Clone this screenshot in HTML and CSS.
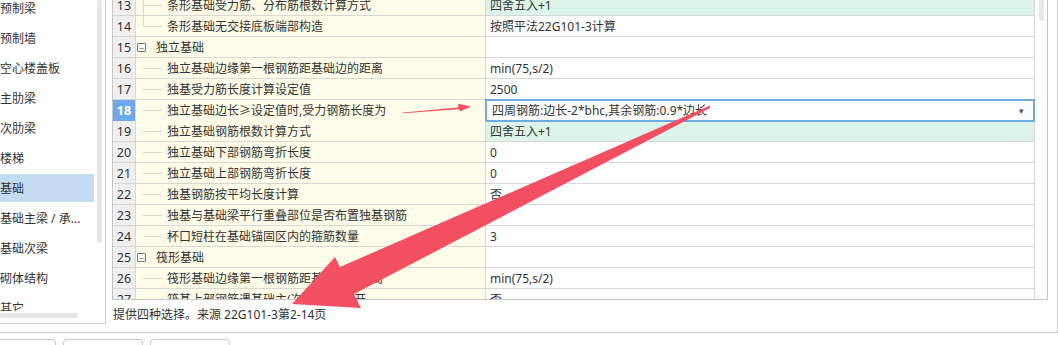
FILE: index.html
```html
<!DOCTYPE html>
<html lang="zh-CN">
<head>
<meta charset="UTF-8">
<meta name="viewport" content="width=device-width, initial-scale=1.0">
<title>计算设置</title>
<link rel="stylesheet" href="styles.css">
</head>
<body>
<div class="window">
  <div class="frame">
    <aside class="side">
      <div class="side-body">
        <ul class="nav">
          <li>预制梁</li>
          <li>预制墙</li>
          <li>空心楼盖板</li>
          <li>主肋梁</li>
          <li>次肋梁</li>
          <li>楼梯</li>
          <li class="active">基础</li>
          <li>基础主梁 / 承台梁</li>
          <li>基础次梁</li>
          <li>砌体结构</li>
          <li>其它</li>
        </ul>
        <div class="vscroll"><span class="thumb"></span></div>
      </div>
      <div class="hscroll"><span class="thumb"></span></div>
    </aside>

    <section class="main">
      <div class="grid">
        <div class="rows">
          <div class="rows-inner">
            <div class="row">
              <div class="num">13</div>
              <div class="name child mid">条形基础受力筋、分布筋根数计算方式</div>
              <div class="val green">四舍五入+1</div>
            </div>
            <div class="row">
              <div class="num">14</div>
              <div class="name child last">条形基础无交接底板端部构造</div>
              <div class="val">按照平法22G101-3计算</div>
            </div>
            <div class="row">
              <div class="num">15</div>
              <div class="name group"><span class="toggle">−</span>独立基础</div>
              <div class="val"></div>
            </div>
            <div class="row">
              <div class="num">16</div>
              <div class="name child">独立基础边缘第一根钢筋距基础边的距离</div>
              <div class="val">min(75,s/2)</div>
            </div>
            <div class="row">
              <div class="num">17</div>
              <div class="name child">独基受力筋长度计算设定值</div>
              <div class="val">2500</div>
            </div>
            <div class="row current">
              <div class="num">18</div>
              <div class="name child">独立基础边长≥设定值时,受力钢筋长度为</div>
              <div class="val editing">四周钢筋:边长-2*bhc,其余钢筋:0.9*边长<span class="caret">▾</span></div>
            </div>
            <div class="row">
              <div class="num">19</div>
              <div class="name child">独立基础钢筋根数计算方式</div>
              <div class="val green">四舍五入+1</div>
            </div>
            <div class="row">
              <div class="num">20</div>
              <div class="name child">独立基础下部钢筋弯折长度</div>
              <div class="val">0</div>
            </div>
            <div class="row">
              <div class="num">21</div>
              <div class="name child">独立基础上部钢筋弯折长度</div>
              <div class="val">0</div>
            </div>
            <div class="row">
              <div class="num">22</div>
              <div class="name child">独基钢筋按平均长度计算</div>
              <div class="val">否</div>
            </div>
            <div class="row">
              <div class="num">23</div>
              <div class="name child">独基与基础梁平行重叠部位是否布置独基钢筋</div>
              <div class="val"></div>
            </div>
            <div class="row">
              <div class="num">24</div>
              <div class="name child">杯口短柱在基础锚固区内的箍筋数量</div>
              <div class="val">3</div>
            </div>
            <div class="row">
              <div class="num">25</div>
              <div class="name group"><span class="toggle">−</span>筏形基础</div>
              <div class="val"></div>
            </div>
            <div class="row">
              <div class="num">26</div>
              <div class="name child">筏形基础边缘第一根钢筋距基础边的距离</div>
              <div class="val">min(75,s/2)</div>
            </div>
            <div class="row">
              <div class="num">27</div>
              <div class="name child">筏基上部钢筋遇基础主(次)梁是否断开</div>
              <div class="val">否</div>
            </div>
          </div>
        </div>
        <div class="vbar"><span class="thumb"></span></div>
      </div>
      <p class="hint">提供四种选择。来源 22G101-3第2-14页</p>
    </section>
  </div>

  <div class="buttons">
    <button class="btn first" aria-label="导入规则"></button>
    <button class="btn" aria-label="导出规则"></button>
    <button class="btn" aria-label="恢复默认值"></button>
  </div>

  <svg class="marks" width="1058" height="345" viewBox="0 0 1058 345">
    <polygon class="arrow" points="403,112.4 458,107.6 458.5,103.8 471,106.6 460.5,111.2 458.5,109.2 403,113.2"/>
    <polygon class="arrow" points="710,105.5 340,267 335,257 292,304 361,308 354,294 710,108"/>
  </svg>
</div>
</body>
</html>
```

FILE: styles.css
```css
* {
  box-sizing: border-box;
}
body {
  margin: 0;
  width: 1058px;
  height: 345px;
  overflow: hidden;
  background-color: #fff;
  font-family: "Noto Sans", "Noto Sans CJK SC", sans-serif;
  font-size: 12px;
  color: #333;
}
.window {
  position: relative;
  width: 1058px;
  height: 345px;
  overflow: hidden;
}
.frame {
  display: flex;
  width: 1058px;
  height: 333px;
  border-right: 1px solid #cacaca;
  border-bottom: 1px solid #cacaca;
}

/* left list */
.side {
  width: 106px;
  height: 324px;
  border-right: 1px solid #cfcfcf;
  border-bottom: 1px solid #cfcfcf;
  display: flex;
  flex-direction: column;
  flex-shrink: 0;
}
.side-body {
  display: flex;
  height: 311px;
  overflow: hidden;
}
.nav {
  list-style: none;
  margin: -6px 0 0 0;
  padding: 0;
  width: 94px;
}
.nav li {
  height: 28px;
  margin-bottom: 2px;
  line-height: 30px;
  padding-right: 8px;
  white-space: nowrap;
  overflow: hidden;
  text-overflow: ellipsis;
  color: #333;
}
.nav li.active {
  background-color: #c4dcf2;
}
.vscroll {
  width: 11px;
  padding-left: 3px;
}
.vscroll .thumb {
  display: block;
  width: 5px;
  height: 243px;
  background-color: #e6e6e6;
  border-radius: 2px;
}
.hscroll {
  height: 12px;
  padding-top: 2px;
}
.hscroll .thumb {
  display: block;
  width: 78px;
  height: 5px;
  background-color: #e6e6e6;
  border-radius: 2px;
}

/* property grid */
.main {
  margin-left: 6px;
  display: flex;
  flex-direction: column;
}
.grid {
  display: flex;
  width: 936px;
  height: 300px;
  border: 1px solid #c6c6c6;
  border-top: none;
}
.rows {
  width: 922px;
  overflow: hidden;
}
.rows-inner {
  margin-top: -5px;
}
.row {
  display: grid;
  grid-template-columns: 23px 350px 549px;
  height: 21px;
  border-bottom: 1px solid #d7d7d7;
  line-height: 21px;
}
.row > div {
  border-right: 1px solid #d7d7d7;
  white-space: nowrap;
  overflow: hidden;
}
.num {
  background-color: #efefef;
  text-align: center;
  color: #333;
  font-size: 12.5px;
}
.name {
  background-color: #fffdea;
  position: relative;
}
.name.child {
  padding-left: 31px;
}
.name.child::before {
  content: "";
  position: absolute;
  left: 7px;
  top: 10px;
  width: 19px;
  border-top: 1px solid #d9d9cf;
}
.name.mid::after,
.name.last::after {
  content: "";
  position: absolute;
  left: 7px;
  top: 0;
  bottom: 0;
  border-left: 1px solid #d9d9cf;
}
.name.last::after {
  bottom: 9px;
}
.name.group {
  display: flex;
  align-items: center;
  padding-left: 1px;
}
.toggle {
  display: inline-flex;
  align-items: center;
  justify-content: center;
  width: 9px;
  height: 9px;
  margin-right: 10px;
  border: 1px solid #777;
  border-radius: 1px;
  font-size: 8px;
  line-height: 7px;
  color: #444;
  background-color: #fff;
}
.val {
  padding-left: 4px;
  background-color: #fff;
}
.val.green {
  background-color: #dcf5ea;
}
.current .num {
  background-color: #6ea8ea;
  color: #fff;
  font-weight: bold;
}
.val.editing {
  position: relative;
  overflow: visible;
  padding-left: 6px;
}
.val.editing::after {
  content: "";
  position: absolute;
  top: -1px;
  left: -1px;
  right: -1px;
  bottom: -1px;
  border: 2px solid #6ea8e6;
}
.caret {
  position: absolute;
  right: 10px;
  top: 0;
  font-size: 9px;
  color: #555;
}
.vbar {
  width: 12px;
  padding-left: 4px;
}
.vbar .thumb {
  display: block;
  width: 5px;
  height: 21px;
  background-color: #e8e8e8;
  border-radius: 2px;
}
.hint {
  margin: 0;
  padding-left: 1px;
  line-height: 30px;
  color: #333;
}

/* bottom buttons */
.buttons {
  display: flex;
  gap: 7px;
  height: 6px;
  margin-top: 6px;
  margin-left: -20px;
  overflow: hidden;
}
.btn {
  flex-shrink: 0;
  width: 80px;
  height: 26px;
  border: 1px solid #c8c8c8;
  border-radius: 4px;
  background-color: #fff;
}
.btn.first {
  width: 76px;
}

/* annotation arrows */
.marks {
  position: absolute;
  top: 0;
  left: 0;
  pointer-events: none;
}
.arrow {
  fill: #f24f63;
}
```
